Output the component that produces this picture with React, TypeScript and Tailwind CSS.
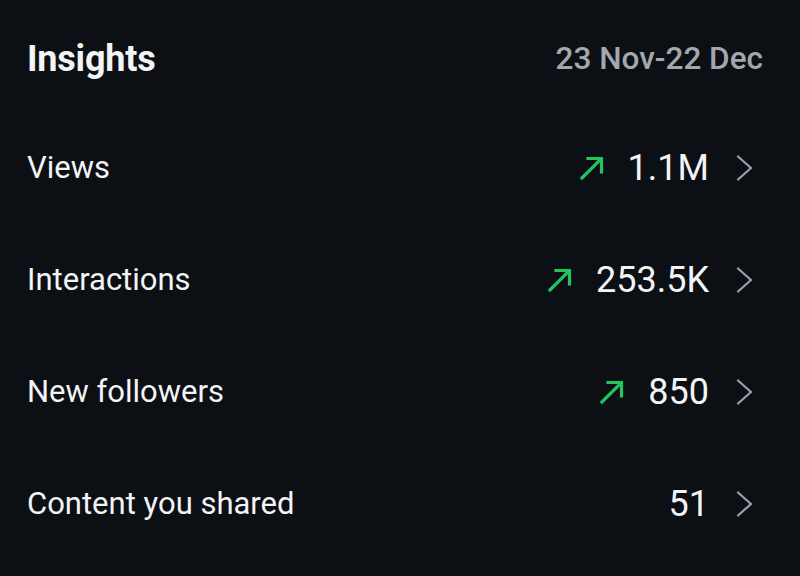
type Row = { label: string; value: string; up: boolean };

const rows: Row[] = [
  { label: "Views", value: "1.1M", up: true },
  { label: "Interactions", value: "253.5K", up: true },
  { label: "New followers", value: "850", up: true },
  { label: "Content you shared", value: "51", up: false },
];

function UpArrow() {
  return (
    <svg
      className="w-[26px] h-[26px] text-[#22c55e]"
      viewBox="0 0 26 26"
      fill="none"
      stroke="currentColor"
      strokeWidth={3.2}
      strokeLinecap="square"
      aria-hidden="true"
    >
      <path d="M3 23 L22 4" />
      <path d="M9 3.5 H22.5 V17" />
    </svg>
  );
}

function Chevron() {
  return (
    <svg
      className="w-[17px] h-[26px] text-[#9ca3af]"
      viewBox="0 0 17 26"
      fill="none"
      stroke="currentColor"
      strokeWidth={2.2}
      strokeLinecap="round"
      strokeLinejoin="round"
      aria-hidden="true"
    >
      <path d="M2 1.5 L15 13 L2 24.5" />
    </svg>
  );
}

export default function App() {
  return (
    <div
      className="w-[800px] h-[576px] bg-[#0c0f14] text-[#f3f4f6] px-[27px]"
      style={{ fontFamily: "Roboto, 'Noto Sans', sans-serif" }}
    >
      {/* Header */}
      <div className="h-[112px] flex items-center justify-between pt-[6px]">
        <h1 className="text-[36px] font-bold tracking-[-0.2px]">Insights</h1>
        <span className="text-[31.5px] font-medium text-[#a3a7ae] pr-[10px]">
          23 Nov-22 Dec
        </span>
      </div>

      {/* Metric rows */}
      {rows.map((row) => (
        <div key={row.label} className="h-[112px] flex items-center justify-between">
          <span className="text-[31px]">{row.label}</span>
          <div className="flex items-center">
            {row.up && (
              <span className="mr-[23px]">
                <UpArrow />
              </span>
            )}
            <span className="text-[36px]">{row.value}</span>
            <span className="ml-[27px] mr-[20px]">
              <Chevron />
            </span>
          </div>
        </div>
      ))}
    </div>
  );
}
